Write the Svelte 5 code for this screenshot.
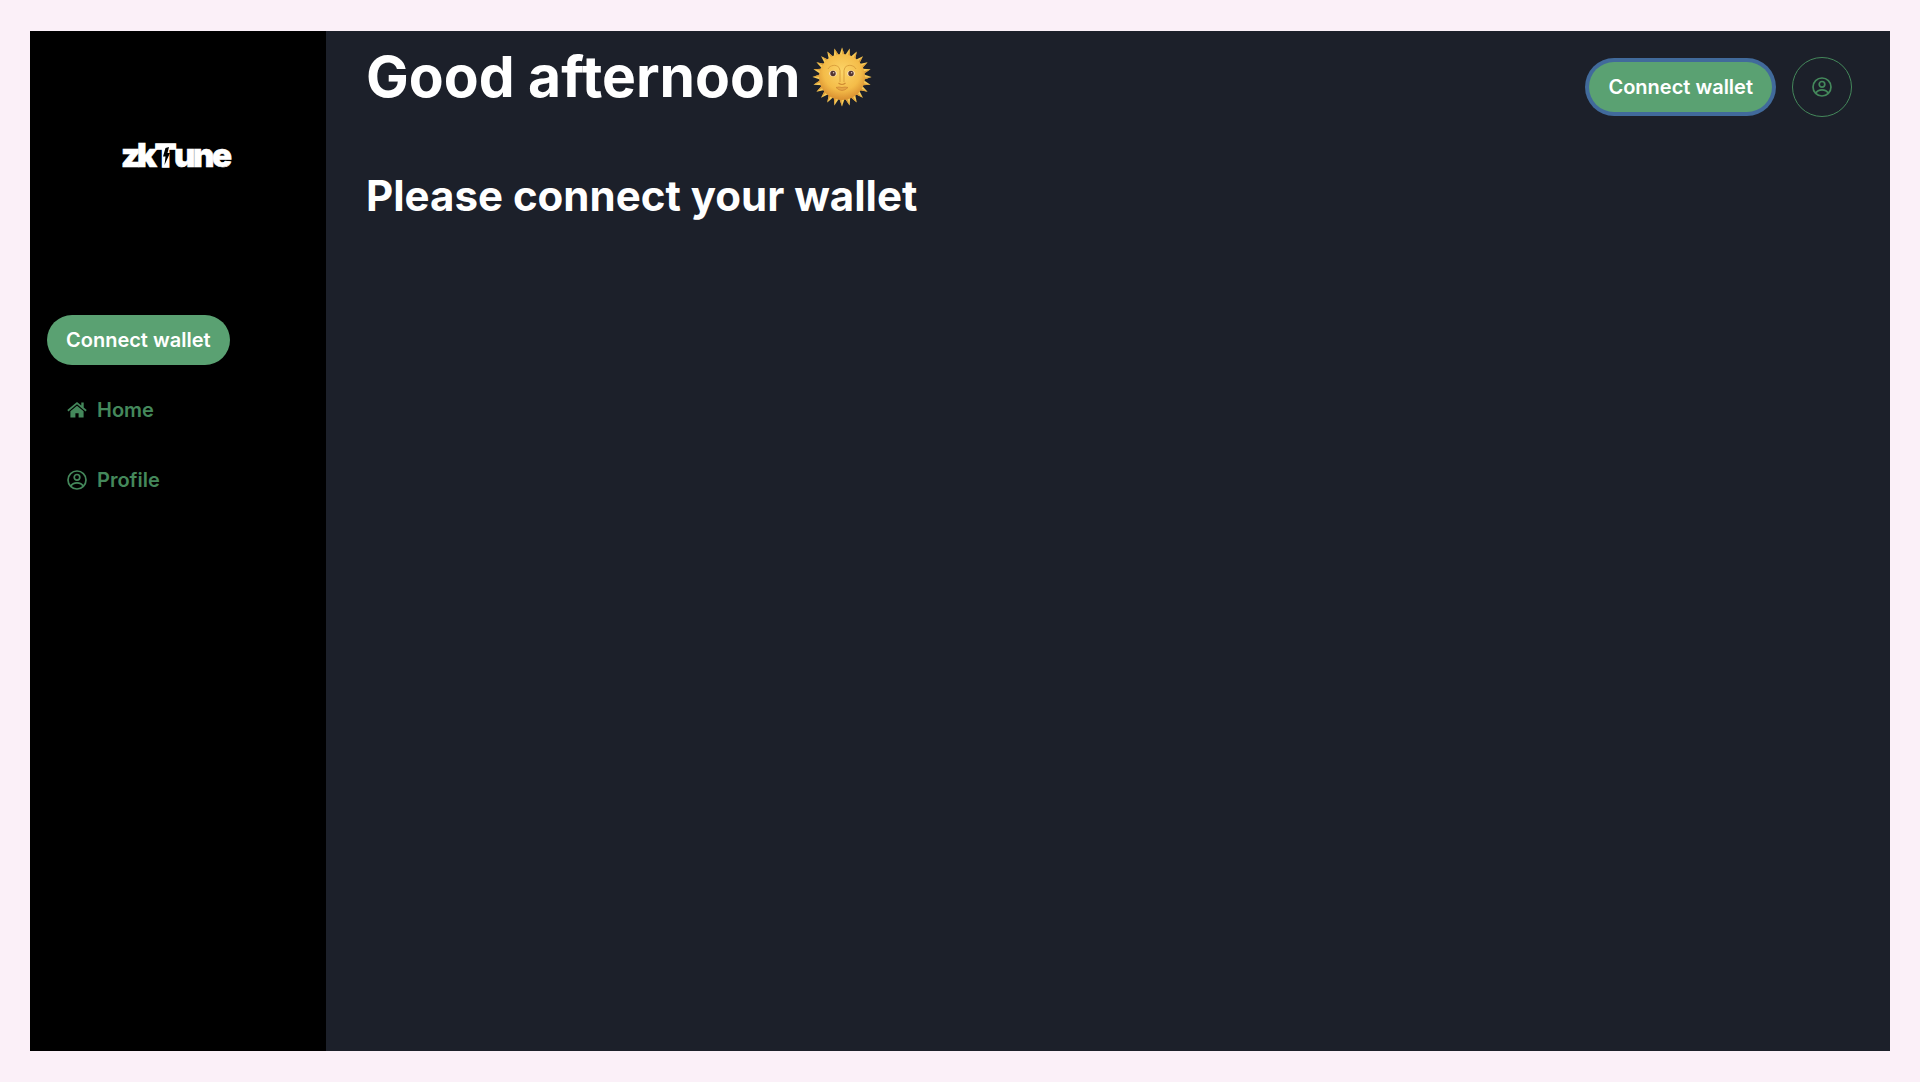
<script>
  const navItems = [
    { label: 'Home', icon: 'home' },
    { label: 'Profile', icon: 'user' }
  ];
  const rays = Array.from({ length: 24 }, (_, i) => i * 15);
</script>

{#snippet userIcon()}
  <svg class="icon" viewBox="0 0 20 20" fill="none" stroke="currentColor" stroke-width="1.7" aria-hidden="true">
    <circle cx="10" cy="10" r="9" />
    <circle cx="10" cy="7.3" r="2.8" />
    <path d="M3.6 16.2C5 13.8 7.2 12.8 10 12.8s5 1 6.4 3.4" />
  </svg>
{/snippet}

<div class="frame">
  <aside class="sidebar">
    <a class="logo" href="#home" aria-label="zkTune">
      <svg viewBox="0 0 112 28" aria-hidden="true">
        <g class="word">
          <text x="-1 15" y="26">zk</text>
          <text x="33" y="26" class="tee">T</text>
          <text x="52 71 90" y="26">une</text>
        </g>
        <path class="bolt" d="M43.500 7l3.500-1-1.500 6h2.500l-5.500 12 1-8.500h-2.500z" />
      </svg>
    </a>
    <nav class="nav">
      <button class="pill" type="button">Connect wallet</button>
      {#each navItems as item}
        <a class="item" href={'#' + item.icon}>
          {#if item.icon === 'home'}
            <svg class="icon" viewBox="0 0 20 20" fill="currentColor" aria-hidden="true">
              <path d="M10 5.800L3.400 11.300V17.500h5v-4.300h3.200v4.300h5v-6.200z" />
              <path d="M.3 10.100L10 2l4.300 3.600V2.600h2.400v5l3 2.500-1.100 1.300L10 4.200 1.400 11.400z" />
            </svg>
          {:else}
            {@render userIcon()}
          {/if}
          <span>{item.label}</span>
        </a>
      {/each}
    </nav>
  </aside>

  <main class="main">
    <header class="top">
      <h1>
        <span>Good afternoon</span>
        <svg class="sun" viewBox="-30 -30 60 60" role="img" aria-label="Sun with face">
          <defs>
            <radialGradient id="face" cx="50%" cy="38%" r="62%">
              <stop offset="0" stop-color="#fcd568" />
              <stop offset=".65" stop-color="#f4bc49" />
              <stop offset="1" stop-color="#d98f30" />
            </radialGradient>
          </defs>
          {#each rays as angle}
            <path d="M-2.700-21.500L0-29.500 2.700-21.500z" fill="#f5cb58" transform="rotate({angle})" />
            <path d="M.4-21.500L0-29.500 2.700-21.500z" fill="#dc9c38" transform="rotate({angle})" />
          {/each}
          <circle r="23" fill="url(#face)" />
          <path d="M-14-8c2-4 8-5 11-1.500l1 3V5M14-8c-2-4-8-5-11-1.500l-1 3V5" fill="none" stroke="#dba03c" stroke-width="1" />
          <ellipse cx="-9" cy="-3.500" rx="3.800" ry="3" fill="#fbe3c0" />
          <ellipse cx="9" cy="-3.500" rx="3.800" ry="3" fill="#fbe3c0" />
          <circle cx="-9" cy="-3.500" r="2.700" fill="#543530" />
          <circle cx="9" cy="-3.500" r="2.700" fill="#543530" />
          <circle cx="-8.400" cy="-4.300" r=".8" fill="#d8c8c8" />
          <circle cx="9.600" cy="-4.300" r=".8" fill="#d8c8c8" />
          <path d="M-3.500 6q3.500 3 7 0" fill="none" stroke="#cf8b32" stroke-width="1.200" />
          <path d="M-6 10.500q3-1 6 0 3-1 6 0-6 6-12 0z" fill="#e6a544" stroke="#cb8431" stroke-width=".7" />
        </svg>
      </h1>
      <div class="actions">
        <button class="pill focused" type="button">Connect wallet</button>
        <button class="avatar" type="button" aria-label="Profile">{@render userIcon()}</button>
      </div>
    </header>
    <h2>Please connect your wallet</h2>
  </main>
</div>

<style>
  :global(body) {
    margin: 0;
    background: #fbf0f8;
  }
  .frame {
    box-sizing: border-box;
    display: flex;
    min-height: 100vh;
    padding: 31px 30px;
    background: #fbf0f8;
    font-family: Inter, 'Liberation Sans', sans-serif;
  }
  .sidebar {
    box-sizing: border-box;
    flex: 0 0 296px;
    padding: 110px 17px 20px;
    background: #000;
  }
  .logo {
    display: block;
    width: 112px;
    margin: 0 auto;
  }
  .logo svg {
    display: block;
    width: 112px;
    height: 28px;
    overflow: visible;
  }
  .word {
    fill: #fff;
    stroke: #fff;
    stroke-width: 0.6px;
    font-size: 33px;
    font-weight: 900;
  }
  .tee {
    font-size: 31px;
    stroke-width: 1.4px;
  }
  .bolt {
    fill: #000;
  }
  .nav {
    display: flex;
    flex-direction: column;
    align-items: flex-start;
    gap: 20px;
    margin-top: 146px;
  }
  button {
    margin: 0;
    border: 0;
    font: inherit;
    cursor: pointer;
  }
  .pill {
    height: 50px;
    padding: 0 19px;
    border-radius: 25px;
    background: #5aa172;
    color: #fff;
    font-size: 20px;
    font-weight: 600;
    line-height: 24px;
  }
  .focused {
    box-shadow: 0 0 0 4px #416a9b;
  }
  .item {
    display: flex;
    align-items: center;
    gap: 10px;
    height: 50px;
    padding: 0 20px;
    color: #44885b;
    font-size: 20px;
    font-weight: 600;
    line-height: 24px;
    text-decoration: none;
  }
  .icon {
    display: block;
    width: 20px;
    height: 20px;
  }
  .main {
    flex: 1;
    min-width: 0;
    padding: 10px 38px 40px 40px;
    background: #1c202a;
    color: #fff;
  }
  .top {
    display: flex;
    justify-content: space-between;
    align-items: flex-start;
  }
  h1,
  h2 {
    margin: 0;
    font-weight: 700;
  }
  h1 {
    display: flex;
    align-items: center;
    gap: 12px;
    font-size: 57px;
    line-height: 72px;
  }
  .sun {
    display: block;
    width: 60px;
    height: 60px;
  }
  .actions {
    display: flex;
    align-items: center;
    gap: 20px;
    padding-top: 16px;
  }
  .avatar {
    display: flex;
    align-items: center;
    justify-content: center;
    width: 60px;
    height: 60px;
    padding: 0;
    border: 1px solid #44885b;
    border-radius: 50%;
    background: none;
    color: #44885b;
  }
  h2 {
    margin-top: 51px;
    font-size: 42px;
    line-height: 56px;
  }
</style>
